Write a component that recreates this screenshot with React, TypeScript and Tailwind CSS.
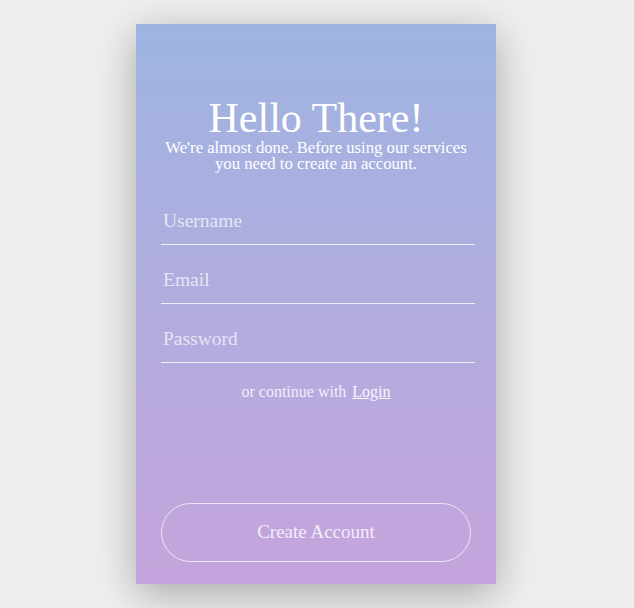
import React, { useState } from "react";

const App: React.FC = () => {
  const [username, setUsername] = useState("");
  const [email, setEmail] = useState("");
  const [password, setPassword] = useState("");

  const inputClass =
    "block w-[314px] h-12 bg-transparent border-b border-white/80 px-[2px] text-[19.5px] text-white placeholder:text-white/70 outline-none";

  return (
    <div className="min-h-[608px] w-full bg-[#efefef] flex pl-[136px] pt-6 font-['Liberation_Serif',serif]">
      <div className="w-[360px] h-[560px] bg-gradient-to-b from-[#9db4e1] to-[#c4a4dc] shadow-[0_10px_40px_rgba(0,0,0,0.3)] flex flex-col px-[25px] pb-[22px]">
        <h1 className="mt-[72px] text-center text-[42px] leading-[44px] text-white">
          Hello There!
        </h1>
        <p className="text-center text-[16.7px] leading-4 text-white">
          We're almost done. Before using our services you need to create an
          account.
        </p>

        <form
          className="mt-[25px] flex flex-col gap-[11px]"
          onSubmit={(e) => e.preventDefault()}
        >
          <input
            type="text"
            placeholder="Username"
            className={inputClass}
            value={username}
            onChange={(e) => setUsername(e.target.value)}
          />
          <input
            type="email"
            placeholder="Email"
            className={inputClass}
            value={email}
            onChange={(e) => setEmail(e.target.value)}
          />
          <input
            type="password"
            placeholder="Password"
            className={inputClass}
            value={password}
            onChange={(e) => setPassword(e.target.value)}
          />
        </form>

        <div className="mt-[19px] flex justify-center items-center gap-[6px] text-[16px] leading-5">
          <span className="text-white/80">or continue with</span>
          <a href="#" className="text-white/90 underline">
            Login
          </a>
        </div>

        <button
          type="button"
          className="mt-auto w-[310px] h-[59px] rounded-full border border-white/70 text-[19px] text-white/80"
        >
          Create Account
        </button>
      </div>
    </div>
  );
};

export default App;
